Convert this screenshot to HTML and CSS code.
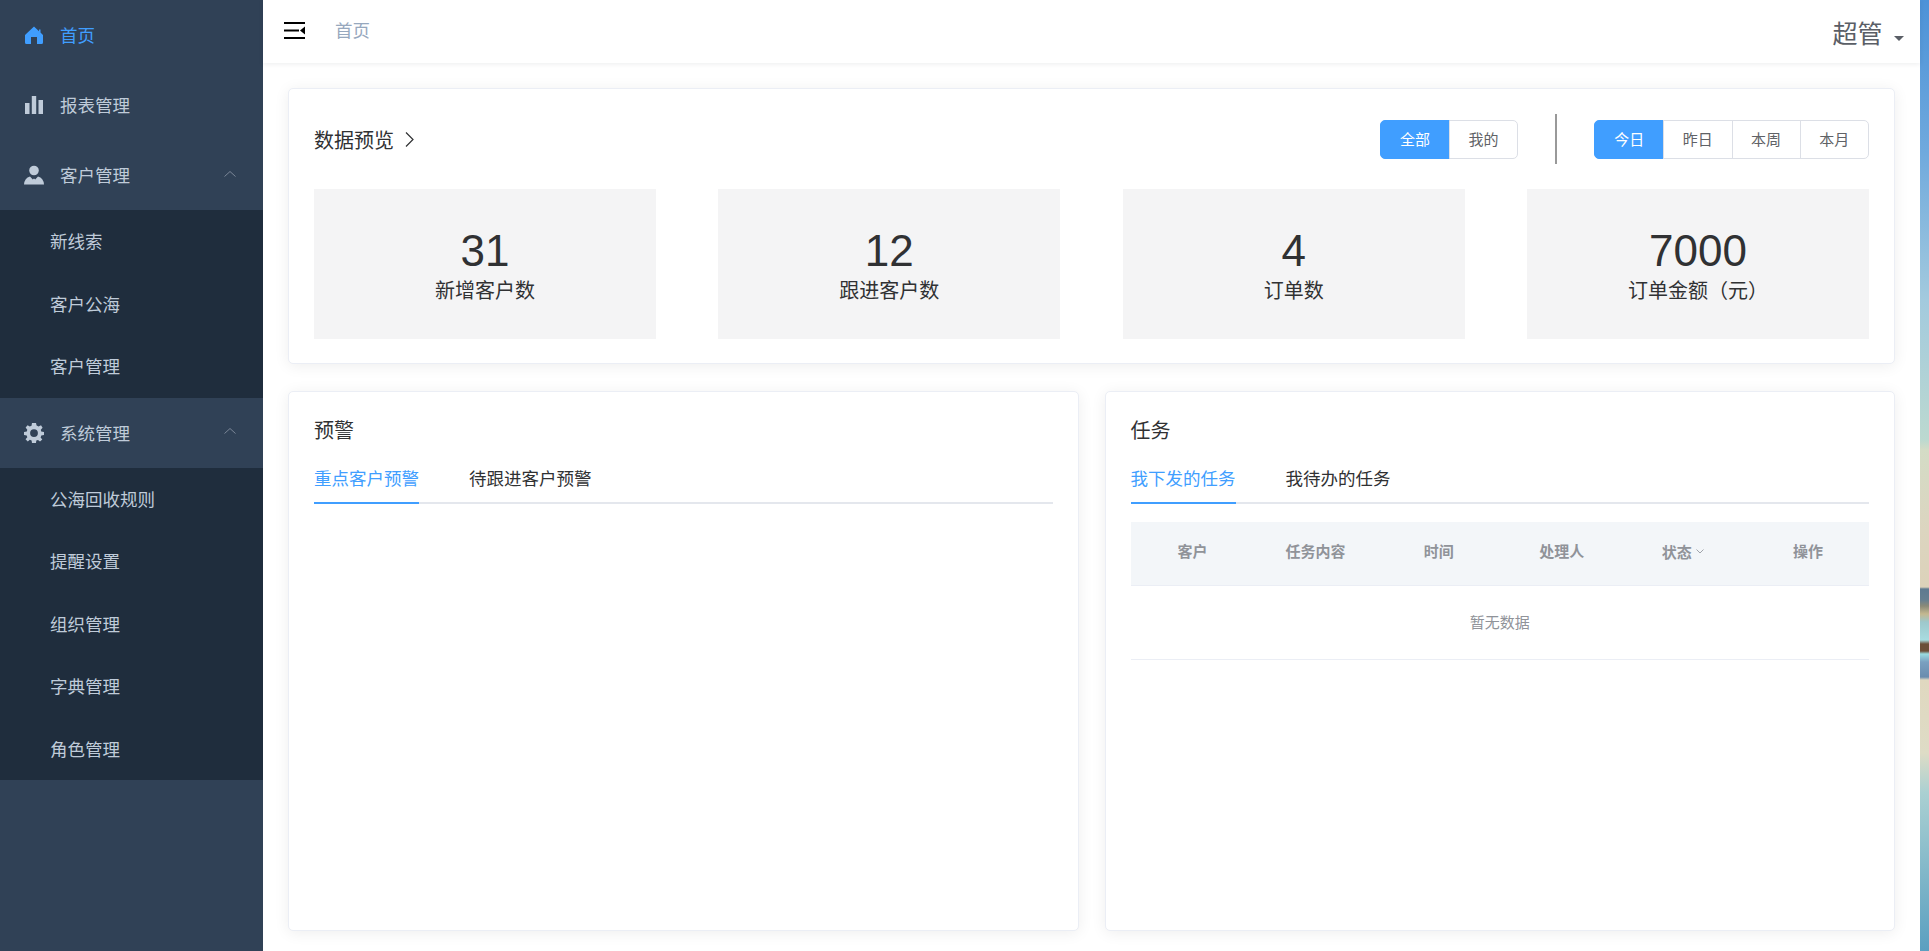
FILE: index.html
```html
<!DOCTYPE html>
<html lang="zh-CN">
<head>
    <meta charset="UTF-8">
    <title>首页</title>
    <link rel="stylesheet" href="styles.css">
</head>
<body>
    <div class="app">
        <div class="sidebar">
            <div class="menu-item active">
                <svg class="menu-icon" viewBox="0 0 18 18"><path d="M9 0.5 L14 5.2 V3.5 H15.5 V6.6 L18 9 V16.5 Q18 18 16.500 18 H12 V11 H6 V18 H1.500 Q0 18 0 16.500 V9 Z"/></svg>
                <span>首页</span>
            </div>
            <div class="menu-item">
                <svg class="menu-icon" viewBox="0 0 18 18"><path d="M0 7 H4.500 V18 H0 Z M6.800 0 H11.200 V18 H6.800 Z M13.500 4 H18 V18 H13.500 Z"/></svg>
                <span>报表管理</span>
            </div>
            <div class="menu-item">
                <svg class="menu-icon icon-user" viewBox="0 0 20 19"><circle cx="10" cy="5" r="4.800"/><path d="M0 19 Q0.500 12.500 6 11 L8.800 14 L10 13 L11.200 14 L14 11 Q19.500 12.500 20 19 Z"/></svg>
                <span>客户管理</span>
                <svg class="menu-arrow" viewBox="0 0 12 6"><path d="M0.500 5.500 L6 0.500 L11.500 5.500"/></svg>
            </div>
            <div class="sub-menu">
                <div class="sub-item">新线索</div>
                <div class="sub-item">客户公海</div>
                <div class="sub-item">客户管理</div>
            </div>
            <div class="menu-item">
                <svg class="menu-icon icon-user" viewBox="0 0 20 20"><path fill-rule="evenodd" d="M8 0 H12 L12.600 2.600 L14.600 3.500 L17 2.200 L18.600 4.800 L16.800 6.800 L17.200 8.600 L20 9 V12 L17.300 12.500 L16.600 14.400 L18.300 16.600 L16 18.500 L14 16.900 L12.300 17.500 L12 20 H8 L7.600 17.500 L5.800 16.800 L3.800 18.400 L1.500 16.300 L3.300 14.300 L2.700 12.500 L0 12 V9 L2.800 8.500 L3.300 6.700 L1.600 4.600 L3.600 2.300 L5.800 3.500 L7.500 2.700 Z M10 6.200 A3.900 3.900 0 1 0 10 14 A3.900 3.900 0 1 0 10 6.200 Z"/></svg>
                <span>系统管理</span>
                <svg class="menu-arrow" viewBox="0 0 12 6"><path d="M0.500 5.500 L6 0.500 L11.500 5.500"/></svg>
            </div>
            <div class="sub-menu">
                <div class="sub-item">公海回收规则</div>
                <div class="sub-item">提醒设置</div>
                <div class="sub-item">组织管理</div>
                <div class="sub-item">字典管理</div>
                <div class="sub-item">角色管理</div>
            </div>
        </div>
        <div class="main">
            <div class="navbar">
                <svg class="hamburger" viewBox="0 0 21 17"><path d="M0 0 H21 V2 H0 Z M0 7.500 H15 V9.500 H0 Z M0 15 H21 V17 H0 Z M16 8.500 L21 4.500 V12.500 Z"/></svg>
                <span class="crumb">首页</span>
                <div class="user">
                    <span class="user-name">超管</span>
                    <span class="user-caret"></span>
                </div>
            </div>
            <div class="content">
                <div class="card overview">
                    <div class="overview-head">
                        <div class="card-title">
                            <span>数据预览</span>
                            <svg class="title-arrow" viewBox="0 0 9 15"><path d="M1 0.500 L8 7.500 L1 14.500"/></svg>
                        </div>
                        <div class="filters">
                            <div class="btn-group">
                                <div class="btn on">全部</div>
                                <div class="btn">我的</div>
                            </div>
                            <div class="filter-line"></div>
                            <div class="btn-group">
                                <div class="btn on">今日</div>
                                <div class="btn">昨日</div>
                                <div class="btn">本周</div>
                                <div class="btn">本月</div>
                            </div>
                        </div>
                    </div>
                    <div class="stats">
                        <div class="stat"><div class="stat-num">31</div><div class="stat-label">新增客户数</div></div>
                        <div class="stat"><div class="stat-num">12</div><div class="stat-label">跟进客户数</div></div>
                        <div class="stat"><div class="stat-num">4</div><div class="stat-label">订单数</div></div>
                        <div class="stat"><div class="stat-num">7000</div><div class="stat-label">订单金额（元）</div></div>
                    </div>
                </div>
                <div class="panels">
                    <div class="card panel">
                        <div class="card-title panel-title">预警</div>
                        <div class="tabs">
                            <div class="tab on">重点客户预警</div>
                            <div class="tab">待跟进客户预警</div>
                        </div>
                    </div>
                    <div class="card panel">
                        <div class="card-title panel-title">任务</div>
                        <div class="tabs">
                            <div class="tab on">我下发的任务</div>
                            <div class="tab">我待办的任务</div>
                        </div>
                        <table class="task-table">
                            <thead>
                                <tr>
                                    <th>客户</th>
                                    <th>任务内容</th>
                                    <th>时间</th>
                                    <th>处理人</th>
                                    <th><span class="sort-cell">状态<svg class="sort-icon" viewBox="0 0 8 5"><path d="M0.500 0.500 L4 4 L7.500 0.500"/></svg></span></th>
                                    <th>操作</th>
                                </tr>
                            </thead>
                            <tbody>
                                <tr><td colspan="6">暂无数据</td></tr>
                            </tbody>
                        </table>
                    </div>
                </div>
            </div>
        </div>
    </div>
</body>
</html>
```

FILE: styles.css
```css
*{
    box-sizing: border-box;
}
html,body{
    height: 100%;
}
body{
    margin: 0;
    overflow: hidden;
    font-family: "Liberation Sans", "Noto Sans CJK SC", sans-serif;
    color: #303133;
    /* the wallpaper behind the app, only a thin slice shows on the right */
    background: linear-gradient(to bottom,
        #4c92d8 0, #6fa9dd 150px, #a3cade 300px, #bcd9d0 440px, #d4dcc6 450px,
        #dcd5c0 530px, #dcd2ba 587px, #5e7a90 589px, #667f90 600px, #8a8a78 606px,
        #c4b890 614px, #9ec8cc 622px, #a8dce0 640px, #6b4f38 644px, #6b4f38 651px,
        #9adce0 654px, #7aa0c0 662px, #6a8cae 677px, #e0d8c0 680px, #dedcc6 753px,
        #aad0d2 793px, #5a9fc0 951px);
}
.app{
    display: flex;
    width: 1920px;
    height: 951px;
}

.sidebar{
    width: 263px;
    flex-shrink: 0;
    background-color: #304156;
    color: #bfcbd9;
    font-size: 17.5px;
}
.menu-item{
    display: flex;
    align-items: center;
    height: 70px;
    padding-left: 25px;
}
.menu-item>span{
    margin-top: -1px;
}
.menu-item.active{
    color: #409eff;
}
.menu-icon{
    width: 18px;
    height: 18px;
    margin-right: 17px;
    fill: currentColor;
}
.menu-icon.icon-user{
    width: 20px;
    height: 20px;
    margin-left: -1px;
    margin-right: 16px;
}
.menu-arrow{
    width: 12px;
    height: 6px;
    margin-left: auto;
    margin-right: 27px;
    margin-top: -3px;
    fill: none;
    stroke: #7b8797;
    stroke-width: 1;
}
.sub-menu{
    background-color: #1f2d3d;
}
.sub-item{
    display: flex;
    align-items: center;
    height: 62.5px;
    padding-left: 50px;
    padding-bottom: 1px;
}

.main{
    flex: 1;
    display: flex;
    flex-direction: column;
    background-color: #fff;
}
.navbar{
    position: relative;
    display: flex;
    align-items: center;
    height: 63px;
    flex-shrink: 0;
    padding: 0 16px 0 21px;
    box-shadow: 0 1px 5px rgba(0, 21, 41, 0.08);
}
.hamburger{
    width: 21px;
    height: 17px;
    margin-top: -3px;
    fill: #000;
}
.crumb{
    margin-left: 30px;
    margin-top: -4px;
    font-size: 17.5px;
    color: #97a8be;
}
.user{
    display: flex;
    align-items: center;
    margin-left: auto;
}
.user-name{
    font-size: 25px;
    color: #5a5e66;
}
.user-caret{
    width: 0;
    height: 0;
    margin-left: 11.5px;
    margin-top: 14px;
    border-style: solid;
    border-width: 5px 5px 0;
    border-color: #5a5e66 transparent transparent;
}

.content{
    flex: 1;
    display: flex;
    flex-direction: column;
    gap: 27px;
    padding: 25px 25px 20px 25px;
}
.card{
    background-color: #fff;
    border: 1px solid #ebeef5;
    border-radius: 5px;
    box-shadow: 0 2px 15px rgba(0, 0, 0, 0.07);
}
.overview{
    height: 276px;
    flex-shrink: 0;
    padding: 25px;
}
.overview-head{
    display: flex;
    align-items: center;
    justify-content: space-between;
    height: 50px;
    margin-bottom: 25px;
}
.card-title{
    display: flex;
    align-items: center;
    font-size: 20px;
}
.title-arrow{
    width: 9px;
    height: 15px;
    margin-left: 11px;
    fill: none;
    stroke: #303133;
    stroke-width: 1.2;
}
.filters{
    display: flex;
    align-items: center;
}
.filter-line{
    width: 2px;
    height: 50px;
    margin: 0 37px 0 37px;
    background-color: #999;
}
.btn-group{
    display: flex;
}
.btn{
    width: 69.25px;
    height: 39px;
    line-height: 37px;
    text-align: center;
    font-size: 15px;
    color: #606266;
    border: 1px solid #dcdfe6;
    margin-left: -1px;
}
.btn:first-child{
    margin-left: 0;
    border-radius: 5px 0 0 5px;
}
.btn:last-child{
    border-radius: 0 5px 5px 0;
}
.btn.on{
    width: 70px;
    color: #fff;
    background-color: #409eff;
    border-color: #409eff;
}
.stats{
    display: flex;
    justify-content: space-between;
}
.stat{
    width: 342px;
    height: 150px;
    padding-top: 3px;
    display: flex;
    flex-direction: column;
    align-items: center;
    justify-content: center;
    background-color: #f4f4f5;
}
.stat-num{
    font-size: 44px;
    line-height: 50px;
}
.stat-label{
    font-size: 20px;
    line-height: 30px;
}

.panels{
    flex: 1;
    display: flex;
    gap: 26px;
}
.panel{
    flex: 1;
    padding: 24px 25px 25px 25px;
}
.panel-title{
    height: 38px;
    padding-bottom: 12px;
}
.tabs{
    display: flex;
    gap: 50px;
    height: 50px;
    border-bottom: 2px solid #e4e7ed;
    margin-bottom: 18px;
    font-size: 17.5px;
}
.tab{
    height: 50px;
    line-height: 50px;
}
.tab.on{
    color: #409eff;
    border-bottom: 2px solid #409eff;
}
.task-table{
    width: 100%;
    table-layout: fixed;
    border-collapse: collapse;
    font-size: 15px;
}
.task-table th{
    height: 63px;
    padding: 0 0 6px 1px;
    color: #909399;
    font-weight: bold;
    background-color: #f3f6f9;
    border-bottom: 1px solid #ebeef5;
}
.task-table td{
    height: 74px;
    padding: 0 0 1px;
    text-align: center;
    color: #909399;
    border-bottom: 1px solid #ebeef5;
}
.sort-cell{
    display: inline-flex;
    align-items: center;
    position: relative;
    top: 1px;
    left: -2px;
}
.sort-icon{
    width: 8px;
    height: 5px;
    margin-left: 4px;
    fill: none;
    stroke: #a0a4ab;
    stroke-width: 1;
}
```
